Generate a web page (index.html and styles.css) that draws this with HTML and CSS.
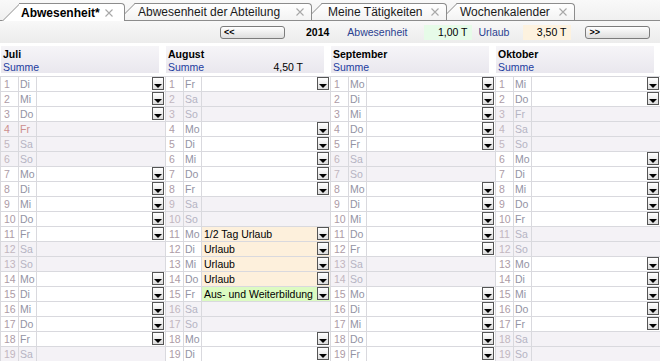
FILE: index.html
```html
<!DOCTYPE html>
<html lang="de">
  <head>
    <meta charset="UTF-8" />
    <title>Abwesenheit</title>
    <link rel="stylesheet" href="styles.css">
  </head>
  <body>
    <div class="tabs">
      <div class="tab tab-active tab-abw">
        <span>Abwesenheit*</span>
        <svg class="close" width="8" height="8" viewBox="0 0 8 8"><path d="M0.5 0.5L7.5 7.5M7.5 0.5L0.5 7.5" /></svg>
      </div>
      <div class="tab tab-abt">
        <span>Abwesenheit der Abteilung</span>
        <svg class="close" width="8" height="8" viewBox="0 0 8 8"><path d="M0.5 0.5L7.5 7.5M7.5 0.5L0.5 7.5" /></svg>
      </div>
      <div class="tab tab-taet">
        <span>Meine Tätigkeiten</span>
        <svg class="close" width="8" height="8" viewBox="0 0 8 8"><path d="M0.5 0.5L7.5 7.5M7.5 0.5L0.5 7.5" /></svg>
      </div>
      <div class="tab tab-woche">
        <span>Wochenkalender</span>
        <svg class="close" width="8" height="8" viewBox="0 0 8 8"><path d="M0.5 0.5L7.5 7.5M7.5 0.5L0.5 7.5" /></svg>
      </div>
    </div>

    <div class="toolbar">
      <button class="nav-btn">&lt;&lt;</button>
      <span class="year">2014</span>
      <span class="label label-abw">Abwesenheit</span>
      <span class="value value-green">1,00 T</span>
      <span class="label label-url">Urlaub</span>
      <span class="value value-orange">3,50 T</span>
      <button class="nav-btn nav-next">&gt;&gt;</button>
    </div>

    <div class="months">
      <!-- Juli -->
      <div class="month">
        <div class="month-head">
          <div class="month-name">Juli</div>
          <div class="month-sum"><span>Summe</span></div>
        </div>
        <div class="row"><span class="num">1</span><span class="day">Di</span><span class="cell"><i class="dd"></i></span></div>
        <div class="row"><span class="num">2</span><span class="day">Mi</span><span class="cell"><i class="dd"></i></span></div>
        <div class="row"><span class="num">3</span><span class="day">Do</span><span class="cell"><i class="dd"></i></span></div>
        <div class="row off hol"><span class="num">4</span><span class="day">Fr</span><span class="cell"></span></div>
        <div class="row off"><span class="num">5</span><span class="day">Sa</span><span class="cell"></span></div>
        <div class="row off"><span class="num">6</span><span class="day">So</span><span class="cell"></span></div>
        <div class="row"><span class="num">7</span><span class="day">Mo</span><span class="cell"><i class="dd"></i></span></div>
        <div class="row"><span class="num">8</span><span class="day">Di</span><span class="cell"><i class="dd"></i></span></div>
        <div class="row"><span class="num">9</span><span class="day">Mi</span><span class="cell"><i class="dd"></i></span></div>
        <div class="row"><span class="num">10</span><span class="day">Do</span><span class="cell"><i class="dd"></i></span></div>
        <div class="row"><span class="num">11</span><span class="day">Fr</span><span class="cell"><i class="dd"></i></span></div>
        <div class="row off"><span class="num">12</span><span class="day">Sa</span><span class="cell"></span></div>
        <div class="row off"><span class="num">13</span><span class="day">So</span><span class="cell"></span></div>
        <div class="row"><span class="num">14</span><span class="day">Mo</span><span class="cell"><i class="dd"></i></span></div>
        <div class="row"><span class="num">15</span><span class="day">Di</span><span class="cell"><i class="dd"></i></span></div>
        <div class="row"><span class="num">16</span><span class="day">Mi</span><span class="cell"><i class="dd"></i></span></div>
        <div class="row"><span class="num">17</span><span class="day">Do</span><span class="cell"><i class="dd"></i></span></div>
        <div class="row"><span class="num">18</span><span class="day">Fr</span><span class="cell"><i class="dd"></i></span></div>
        <div class="row off"><span class="num">19</span><span class="day">Sa</span><span class="cell"></span></div>
      </div>

      <!-- August -->
      <div class="month">
        <div class="month-head">
          <div class="month-name">August</div>
          <div class="month-sum"><span>Summe</span><span class="sum-value">4,50 T</span></div>
        </div>
        <div class="row"><span class="num">1</span><span class="day">Fr</span><span class="cell"><i class="dd"></i></span></div>
        <div class="row off"><span class="num">2</span><span class="day">Sa</span><span class="cell"></span></div>
        <div class="row off"><span class="num">3</span><span class="day">So</span><span class="cell"></span></div>
        <div class="row"><span class="num">4</span><span class="day">Mo</span><span class="cell"><i class="dd"></i></span></div>
        <div class="row"><span class="num">5</span><span class="day">Di</span><span class="cell"><i class="dd"></i></span></div>
        <div class="row"><span class="num">6</span><span class="day">Mi</span><span class="cell"><i class="dd"></i></span></div>
        <div class="row"><span class="num">7</span><span class="day">Do</span><span class="cell"><i class="dd"></i></span></div>
        <div class="row"><span class="num">8</span><span class="day">Fr</span><span class="cell"><i class="dd"></i></span></div>
        <div class="row off"><span class="num">9</span><span class="day">Sa</span><span class="cell"></span></div>
        <div class="row off"><span class="num">10</span><span class="day">So</span><span class="cell"></span></div>
        <div class="row"><span class="num">11</span><span class="day">Mo</span><span class="cell cell-urlaub"><span class="entry">1/2 Tag Urlaub</span><i class="dd"></i></span></div>
        <div class="row"><span class="num">12</span><span class="day">Di</span><span class="cell cell-urlaub"><span class="entry">Urlaub</span><i class="dd"></i></span></div>
        <div class="row"><span class="num">13</span><span class="day">Mi</span><span class="cell cell-urlaub"><span class="entry">Urlaub</span><i class="dd"></i></span></div>
        <div class="row"><span class="num">14</span><span class="day">Do</span><span class="cell cell-urlaub"><span class="entry">Urlaub</span><i class="dd"></i></span></div>
        <div class="row"><span class="num">15</span><span class="day">Fr</span><span class="cell cell-bildung"><span class="entry">Aus- und Weiterbildung</span><i class="dd"></i></span></div>
        <div class="row off"><span class="num">16</span><span class="day">Sa</span><span class="cell"></span></div>
        <div class="row off"><span class="num">17</span><span class="day">So</span><span class="cell"></span></div>
        <div class="row"><span class="num">18</span><span class="day">Mo</span><span class="cell"><i class="dd"></i></span></div>
        <div class="row"><span class="num">19</span><span class="day">Di</span><span class="cell"><i class="dd"></i></span></div>
      </div>

      <!-- September -->
      <div class="month">
        <div class="month-head">
          <div class="month-name">September</div>
          <div class="month-sum"><span>Summe</span></div>
        </div>
        <div class="row"><span class="num">1</span><span class="day">Mo</span><span class="cell"><i class="dd"></i></span></div>
        <div class="row"><span class="num">2</span><span class="day">Di</span><span class="cell"><i class="dd"></i></span></div>
        <div class="row"><span class="num">3</span><span class="day">Mi</span><span class="cell"><i class="dd"></i></span></div>
        <div class="row"><span class="num">4</span><span class="day">Do</span><span class="cell"><i class="dd"></i></span></div>
        <div class="row"><span class="num">5</span><span class="day">Fr</span><span class="cell"><i class="dd"></i></span></div>
        <div class="row off"><span class="num">6</span><span class="day">Sa</span><span class="cell"></span></div>
        <div class="row off"><span class="num">7</span><span class="day">So</span><span class="cell"></span></div>
        <div class="row"><span class="num">8</span><span class="day">Mo</span><span class="cell"><i class="dd"></i></span></div>
        <div class="row"><span class="num">9</span><span class="day">Di</span><span class="cell"><i class="dd"></i></span></div>
        <div class="row"><span class="num">10</span><span class="day">Mi</span><span class="cell"><i class="dd"></i></span></div>
        <div class="row"><span class="num">11</span><span class="day">Do</span><span class="cell"><i class="dd"></i></span></div>
        <div class="row"><span class="num">12</span><span class="day">Fr</span><span class="cell"><i class="dd"></i></span></div>
        <div class="row off"><span class="num">13</span><span class="day">Sa</span><span class="cell"></span></div>
        <div class="row off"><span class="num">14</span><span class="day">So</span><span class="cell"></span></div>
        <div class="row"><span class="num">15</span><span class="day">Mo</span><span class="cell"><i class="dd"></i></span></div>
        <div class="row"><span class="num">16</span><span class="day">Di</span><span class="cell"><i class="dd"></i></span></div>
        <div class="row"><span class="num">17</span><span class="day">Mi</span><span class="cell"><i class="dd"></i></span></div>
        <div class="row"><span class="num">18</span><span class="day">Do</span><span class="cell"><i class="dd"></i></span></div>
        <div class="row"><span class="num">19</span><span class="day">Fr</span><span class="cell"><i class="dd"></i></span></div>
      </div>

      <!-- Oktober -->
      <div class="month">
        <div class="month-head">
          <div class="month-name">Oktober</div>
          <div class="month-sum"><span>Summe</span></div>
        </div>
        <div class="row"><span class="num">1</span><span class="day">Mi</span><span class="cell"><i class="dd"></i></span></div>
        <div class="row"><span class="num">2</span><span class="day">Do</span><span class="cell"><i class="dd"></i></span></div>
        <div class="row off"><span class="num">3</span><span class="day">Fr</span><span class="cell"></span></div>
        <div class="row off"><span class="num">4</span><span class="day">Sa</span><span class="cell"></span></div>
        <div class="row off"><span class="num">5</span><span class="day">So</span><span class="cell"></span></div>
        <div class="row"><span class="num">6</span><span class="day">Mo</span><span class="cell"><i class="dd"></i></span></div>
        <div class="row"><span class="num">7</span><span class="day">Di</span><span class="cell"><i class="dd"></i></span></div>
        <div class="row"><span class="num">8</span><span class="day">Mi</span><span class="cell"><i class="dd"></i></span></div>
        <div class="row"><span class="num">9</span><span class="day">Do</span><span class="cell"><i class="dd"></i></span></div>
        <div class="row"><span class="num">10</span><span class="day">Fr</span><span class="cell"><i class="dd"></i></span></div>
        <div class="row off"><span class="num">11</span><span class="day">Sa</span><span class="cell"></span></div>
        <div class="row off"><span class="num">12</span><span class="day">So</span><span class="cell"></span></div>
        <div class="row"><span class="num">13</span><span class="day">Mo</span><span class="cell"><i class="dd"></i></span></div>
        <div class="row"><span class="num">14</span><span class="day">Di</span><span class="cell"><i class="dd"></i></span></div>
        <div class="row"><span class="num">15</span><span class="day">Mi</span><span class="cell"><i class="dd"></i></span></div>
        <div class="row"><span class="num">16</span><span class="day">Do</span><span class="cell"><i class="dd"></i></span></div>
        <div class="row"><span class="num">17</span><span class="day">Fr</span><span class="cell"><i class="dd"></i></span></div>
        <div class="row off"><span class="num">18</span><span class="day">Sa</span><span class="cell"></span></div>
        <div class="row off"><span class="num">19</span><span class="day">So</span><span class="cell"></span></div>
      </div>
    </div>
  </body>
</html>
```

FILE: styles.css
```css
body {
  margin: 0;
  width: 660px;
  height: 362px;
  overflow: hidden;
  font-family: "Liberation Sans", Arial, sans-serif;
  font-size: 10.5px;
  color: #000;
  background-color: #fff;
}

/* tab strip */
.tabs {
  position: relative;
  z-index: 0;
  display: flex;
  align-items: flex-end;
  height: 21px;
  box-sizing: border-box;
  padding-left: 9px;
  border-bottom: 1px solid #8c8c8c;
  background: linear-gradient(#f9f9f9, #f0f0f0);
}
.tab {
  position: relative;
  display: flex;
  align-items: center;
  justify-content: space-between;
  height: 17px;
  box-sizing: border-box;
  margin-left: 10px;
  padding: 0 7px 0 3px;
  border-top: 1px solid #8c8c8c;
  border-right: 1px solid #8c8c8c;
  border-top-right-radius: 4px;
  background: linear-gradient(#ffffff, #f3f3f3);
  font-size: 12px;
  color: #1a1a1a;
}
.tab::before {
  content: "";
  position: absolute;
  top: -1px;
  bottom: 0;
  left: -17px;
  width: 24px;
  border-top: 1px solid #8c8c8c;
  border-left: 1px solid #8c8c8c;
  background: inherit;
  transform: skewX(-45deg);
  transform-origin: bottom left;
  z-index: -1;
}
.tab-active {
  height: 18px;
  margin-bottom: -1px;
  padding-left: 2px;
  padding-right: 11px;
  background: #fff;
  font-weight: bold;
  color: #000;
}
.tab-active::before {
  bottom: 0;
}
.tab-abw {
  width: 106px;
}
.tab-abt {
  width: 177px;
}
.tab-taet {
  width: 125px;
  padding-left: 6px;
}
.tab-woche {
  width: 118px;
}
.close {
  flex: none;
  stroke: #a8a8a8;
  stroke-width: 1.1;
}

/* toolbar */
.toolbar {
  display: flex;
  align-items: center;
  height: 22px;
  padding-left: 220px;
  background: linear-gradient(#f8f8f8, #ececec);
}
.nav-btn {
  width: 65px;
  height: 13px;
  box-sizing: border-box;
  margin: 0;
  padding: 0 0 0 3px;
  border: 1px solid #7c7c7c;
  border-radius: 3px;
  background: linear-gradient(#ffffff, #dedede);
  font-family: "Liberation Sans", Arial, sans-serif;
  font-size: 9px;
  font-weight: bold;
  line-height: 11px;
  text-align: left;
  color: #000;
}
.nav-next {
  margin-left: 14px;
}
.year {
  margin-left: 21px;
  font-weight: bold;
}
.label {
  color: #2b4190;
}
.label-abw {
  margin-left: 18px;
}
.label-url {
  margin-left: 6px;
}
.value {
  width: 48px;
  height: 15px;
  box-sizing: border-box;
  padding-right: 5px;
  line-height: 15px;
  text-align: right;
}
.value-green {
  margin-left: 17px;
  background-color: #e6fbe8;
}
.value-orange {
  margin-left: 14px;
  background-color: #fdf2df;
}

/* month columns */
.months {
  display: grid;
  grid-template-columns: repeat(4, 165px);
  padding-top: 3px;
}
.month-head {
  height: 27px;
  box-sizing: border-box;
  margin: 0 6px 3px 1px;
  padding: 2px 3px 0 2px;
  line-height: 13px;
  background: linear-gradient(#f6f5f8, #e9e7ee);
  overflow: hidden;
}
.month-name {
  font-weight: bold;
}
.month-sum {
  display: flex;
  justify-content: space-between;
  color: #1c3ca0;
}
.sum-value {
  margin-right: 18px;
  color: #000;
}

.row {
  display: grid;
  grid-template-columns: 18px 18px 1fr;
  height: 15px;
  box-sizing: border-box;
  border-top: 1px solid #d9d9de;
  line-height: 14px;
}
.num {
  border-left: 1px solid #d9d9de;
  padding-left: 3px;
  color: #ad9ba6;
}
.day {
  border-left: 1px solid #d9d9de;
  padding-left: 1px;
  color: #9393a4;
}
.cell {
  display: flex;
  min-width: 0;
  border-left: 1px solid #d9d9de;
  padding-left: 2px;
}
.row.off .num,
.row.off .day,
.row.off .cell {
  background-color: #f4f2f6;
}
.row.off .num {
  color: #c2b6bf;
}
.row.off .day {
  color: #b4b4c3;
}
.row.hol .num,
.row.hol .day {
  color: #cc8e8e;
}
.cell-urlaub {
  background-color: #fdf0dc;
}
.cell-bildung {
  background-color: #dcfbc2;
}
.entry {
  white-space: nowrap;
}

/* dropdown button */
.dd {
  display: flex;
  align-items: flex-end;
  justify-content: center;
  flex: none;
  width: 12px;
  height: 13px;
  box-sizing: border-box;
  margin-left: auto;
  margin-right: 1px;
  border: 1px solid #555;
  background: linear-gradient(#ffffff, #dcdcdc);
}
.dd::after {
  content: "";
  margin-bottom: 1px;
  border-left: 4px solid transparent;
  border-right: 4px solid transparent;
  border-top: 4px solid #000;
}
```
